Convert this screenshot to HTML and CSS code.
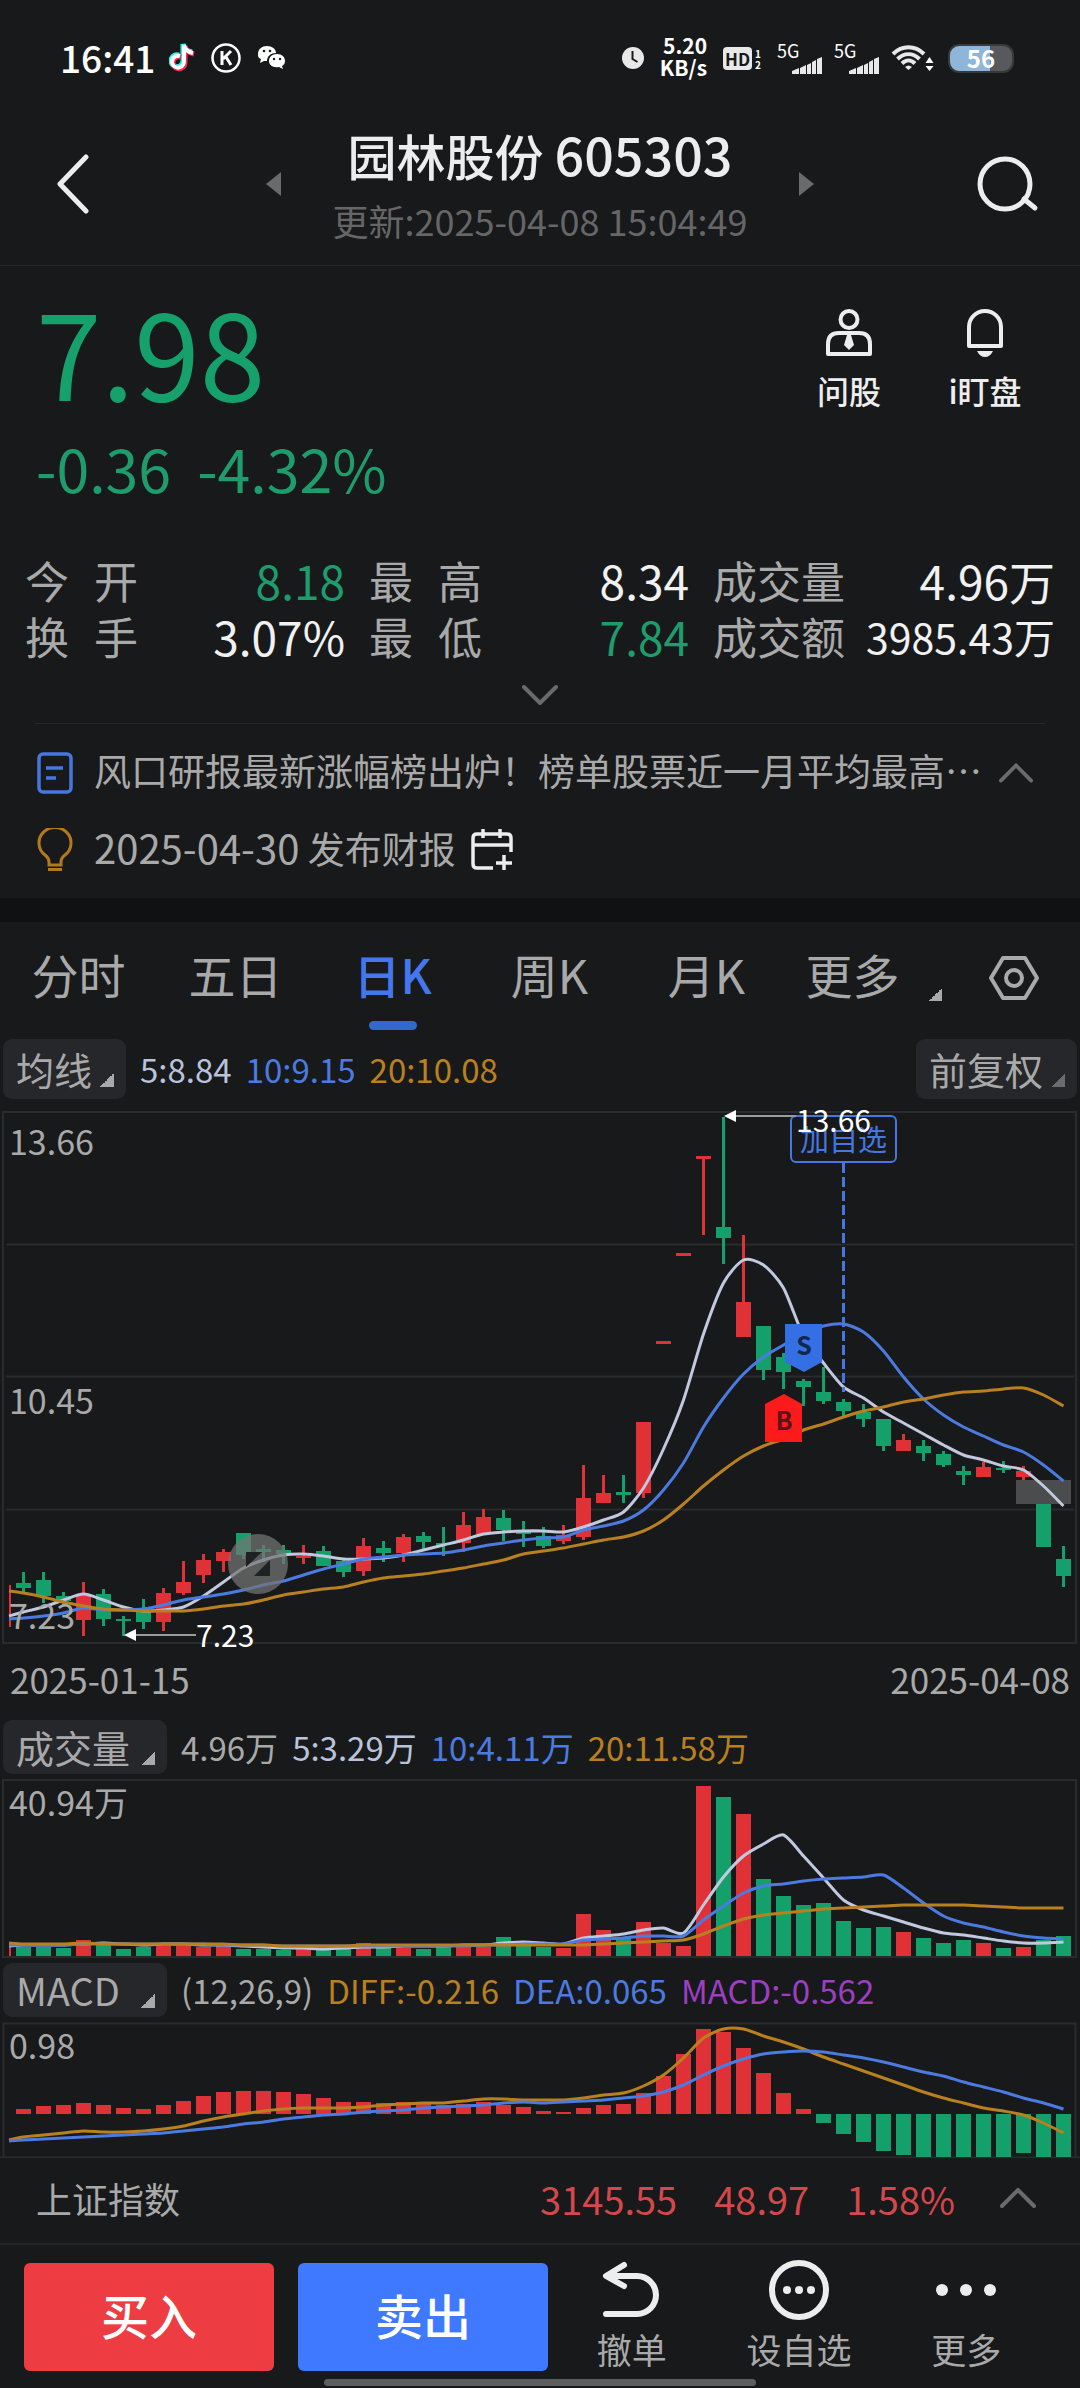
FILE: index.html
```html
<!DOCTYPE html>
<html lang="zh-CN">
<head>
<meta charset="utf-8">
<meta name="viewport" content="width=device-width, initial-scale=1">
<title>园林股份 605303</title>
<link rel="stylesheet" href="styles.css">
</head>
<body>
<div class="statusbar">
  <span class="clock">16:41</span>
  <div class="status-apps">
    <svg width="26" height="30" viewBox="0 0 26 30"><g fill="none" stroke-width="5"><path d="M11 13a6 6 0 1 0 4 6V2c1 5 4 7 9 8" stroke="#25f4ee" transform="translate(-1 -1)"/><path d="M11 13a6 6 0 1 0 4 6V2c1 5 4 7 9 8" stroke="#fe2c55" transform="translate(1 1)"/><path d="M11 13a6 6 0 1 0 4 6V2c1 5 4 7 9 8" stroke="#fff" stroke-width="4"/></g></svg>
    <svg width="30" height="30" viewBox="0 0 30 30" fill="none" stroke="#fff"><circle cx="15" cy="15" r="13.500" stroke-width="2.500"/><path d="M11 8v14M20 8l-8 8M15 14l5 8" stroke-width="3"/></svg>
    <svg width="30" height="26" viewBox="0 0 30 26"><path d="M10 1c5 0 9 3 9 7-5 0-9 3-9 8l-3 0-4 2 1-4C1 13 1 11 1 9c0-5 4-8 9-8z" fill="#fff"/><path d="M20 9c5 0 8 3 8 7 0 2-1 4-3 5l1 3-4-2c-6 1-10-2-10-6s3-7 8-7z" fill="#fff"/><g fill="#18191b"><circle cx="7" cy="6" r="1.300"/><circle cx="13" cy="6" r="1.300"/><circle cx="17" cy="14" r="1.200"/><circle cx="23" cy="14" r="1.200"/></g></svg>
  </div>
  <div class="status-right">
    <svg width="22" height="22" viewBox="0 0 22 22"><circle cx="11" cy="11" r="11" fill="#e8e8e8"/><path d="M10.500 4v8l5 3" fill="none" stroke="#18191b" stroke-width="2"/></svg>
    <span class="speed">5.20<br>KB/s</span>
    <span class="hd-group"><b class="hd">HD</b><small class="sims">1<br>2</small></span>
    <span class="signal"><small>5G</small><svg width="30" height="17" viewBox="0 0 30 17" fill="#e8e8e8"><path d="M0 14l7-3v6H0zM8 11l6-3v9H8zM15 8l4-2v11h-4zM20 5l4-2v14h-4zM25 2l5-2v17h-5z"/></svg></span>
    <span class="signal"><small>5G</small><svg width="30" height="17" viewBox="0 0 30 17" fill="#e8e8e8"><path d="M0 14l7-3v6H0zM8 11l6-3v9H8zM15 8l4-2v11h-4zM20 5l4-2v14h-4zM25 2l5-2v17h-5z"/></svg></span>
    <svg class="wifi" width="43" height="28" viewBox="0 0 43 28"><g fill="none" stroke="#e8e8e8" stroke-width="4"><path d="M2 10c9-9 22-9 31 0"/><path d="M6.500 15c7-6.500 15-6.500 22 0"/><path d="M11 19.500c4-4 9-4 13 0"/></g><path d="M14 23q3.500-3 7 0l-3.500 3z" fill="#e8e8e8"/><path d="M38.500 13l4 6h-8zM38.500 27l4-5h-8z" fill="#fff"/></svg>
    <span class="battery">56</span>
  </div>
</div>

<header class="header">
  <button class="icon-btn back" aria-label="返回"><svg width="34" height="60" viewBox="0 0 34 60" fill="none" stroke="#ededed" stroke-width="5" stroke-linecap="round" stroke-linejoin="round"><path d="M30 3L4 30l26 27"/></svg></button>
  <div class="stock">
    <button class="icon-btn" aria-label="上一只"><svg width="15" height="24" viewBox="0 0 15 24" fill="#6b6b6c"><path d="M15 0v24L0 12z"/></svg></button>
    <div class="stock-name">
      <h1>园林股份 <span class="code">605303</span></h1>
      <p>更新:2025-04-08 15:04:49</p>
    </div>
    <button class="icon-btn" aria-label="下一只"><svg width="15" height="24" viewBox="0 0 15 24" fill="#6b6b6c"><path d="M0 0v24l15-12z"/></svg></button>
  </div>
  <button class="icon-btn" aria-label="搜索"><svg width="62" height="58" viewBox="0 0 62 58" fill="none" stroke="#ededed" stroke-width="5"><circle cx="28" cy="29" r="25"/><path d="M47 44l11 9" stroke-linecap="round"/></svg></button>
</header>

<section class="quote">
  <div class="quote-top">
    <div>
      <div class="price">7.98</div>
      <div class="change"><span>-0.36</span><span>-4.32%</span></div>
    </div>
    <div class="quick">
      <button><svg width="48" height="50" viewBox="0 0 48 50" fill="none" stroke="#ededed" stroke-width="4"><circle cx="24" cy="11.500" r="8.500"/><path d="M3 46V36q0-11 11-11h20q11 0 11 11v10z" stroke-linejoin="round"/><path d="M22 27h4l3 10-5 5-5-5z" fill="#ededed" stroke="none"/></svg><span>问股</span></button>
      <button><svg width="48" height="50" viewBox="0 0 48 50"><path d="M8 38V19a16 16 0 0 1 32 0v19z" fill="none" stroke="#ededed" stroke-width="4" stroke-linejoin="round"/><path d="M16 43h16q-3 6-8 6t-8-6z" fill="#ededed"/></svg><span>i盯盘</span></button>
    </div>
  </div>
  <dl class="stats">
    <div><dt><i>今</i><i>开</i></dt><dd class="down">8.18</dd></div>
    <div><dt><i>最</i><i>高</i></dt><dd>8.34</dd></div>
    <div><dt>成交量</dt><dd>4.96万</dd></div>
    <div><dt><i>换</i><i>手</i></dt><dd>3.07%</dd></div>
    <div><dt><i>最</i><i>低</i></dt><dd class="down">7.84</dd></div>
    <div><dt>成交额</dt><dd class="small">3985.43万</dd></div>
  </dl>
  <button class="expand" aria-label="展开"><svg width="36" height="20" viewBox="0 0 36 20" fill="none" stroke="#6b6b6c" stroke-width="4" stroke-linecap="round"><path d="M2 2l16 16L34 2"/></svg></button>
  <div class="news">
    <div class="news-row">
      <svg width="36" height="42" viewBox="0 0 36 42" fill="none" stroke="#4677e0" stroke-width="3.500"><rect x="2" y="2" width="32" height="38" rx="4"/><path d="M9 16h17M9 26h10"/></svg>
      <a href="#news">风口研报最新涨幅榜出炉！榜单股票近一月平均最高…</a>
      <button class="icon-btn" aria-label="收起"><svg width="34" height="20" viewBox="0 0 36 20" fill="none" stroke="#6b6b6c" stroke-width="4" stroke-linecap="round"><path d="M2 18L18 2l16 16"/></svg></button>
    </div>
    <div class="news-row">
      <svg width="36" height="44" viewBox="0 0 36 44" fill="none" stroke="#b3791b" stroke-width="3"><path d="M12 37v-3q0-4-4-7a16 15.500 0 1 1 20 0q-4 3-4 7v3z"/><path d="M11 41.500h14"/></svg>
      <span><b class="date">2025-04-30</b> 发布财报</span>
      <svg width="42" height="42" viewBox="0 0 42 42" fill="none" stroke="#ededed" stroke-width="3.500"><path d="M22 39H6q-4 0-4-4V9q0-4 4-4h30q4 0 4 4v14M2 16h38M12 0v9M29 0v9M33 26v15M25 34h16"/></svg>
    </div>
  </div>
</section>

<main class="chart">
  <nav class="tabs">
    <button>分时</button><button>五日</button><button class="active">日K</button><button>周K</button><button>月K</button><button class="more">更多</button>
    <button aria-label="设置"><svg width="52" height="46" viewBox="0 0 52 46" fill="none" stroke="#a9a9aa" stroke-width="4"><path d="M15 3h22l12 20-12 20H15L3 23z" stroke-linejoin="round"/><circle cx="26" cy="23" r="8"/></svg></button>
  </nav>

  <div class="legend legend-top">
    <button class="chip">均线<i class="corner"></i></button>
    <span class="c-white">5:8.84</span><span class="c-blue">10:9.15</span><span class="c-orange">20:10.08</span>
    <button class="chip chip-right">前复权<i class="corner dim"></i></button>
  </div>
  <svg class="plot" viewBox="0 0 1080 552">
    <g class="grid"><rect x="3" y="11" width="1073" height="531"/><path d="M6 143.500h1068M6 275.500h1068M6 408.500h1068"/></g>
    <rect x="1016" y="379" width="55" height="24" fill="#4b4c4e"/>
    <g id="candles"></g>
    <g id="price-lines"></g>
    <g fill="none" stroke="#4677e0"><path d="M843.500 62v229" stroke-width="3" stroke-dasharray="10 4"/><rect x="791" y="15" width="105" height="46" rx="5" stroke-width="2"/></g>
    <text class="t-fav" x="800" y="50">加自选</text>
    <path d="M785 223h37v38l-18 10-19-10z" fill="#3470e4"/><text class="t-mark" x="804" y="254" fill="#12264f">S</text>
    <path d="M765 341h37v-38l-18-10-19 10z" fill="#fb1b1b"/><text class="t-mark" x="784" y="329" fill="#5b1218">B</text>
    <text class="t-axis" x="9" y="54">13.66</text>
    <text class="t-axis" x="9" y="313">10.45</text>
    <text class="t-axis" x="9" y="528">7.23</text>
    <g stroke="#9b9b9b" stroke-width="2"><path d="M734 15h62M134 534h62"/></g>
    <path d="M724 15l12-6v12zM124 534l12-6v12z" fill="#fff"/>
    <text class="t-note" x="796" y="31">13.66</text>
    <text class="t-note" x="196" y="546">7.23</text>
    <g class="zoom-icon"><circle cx="258" cy="463" r="30" fill="#747474" opacity=".72"/><path d="M246 451h16l-16 15zM270 459v16h-16z" fill="#202123"/></g>
  </svg>
  <div class="dates"><span>2025-01-15</span><span>2025-04-08</span></div>

  <div class="legend">
    <button class="chip">成交量<i class="corner"></i></button>
    <span>4.96万</span><span class="c-white">5:3.29万</span><span class="c-blue">10:4.11万</span><span class="c-orange">20:11.58万</span>
  </div>
  <svg class="plot" viewBox="0 0 1080 183">
    <rect class="grid" x="3" y="3" width="1073" height="177"/>
    <text class="t-axis" x="9" y="39">40.94万</text>
    <g id="volume"></g>
    <g id="volume-lines"></g>
  </svg>

  <div class="legend">
    <button class="chip">MACD<i class="corner"></i></button>
    <span>(12,26,9)</span><span class="c-orange">DIFF:-0.216</span><span class="c-blue">DEA:0.065</span><span class="c-purple">MACD:-0.562</span>
  </div>
  <svg class="plot" viewBox="0 0 1080 138">
    <path class="grid" d="M3.500 137V3.500h1072V137M0 137.500h1080"/>
    <text class="t-axis" x="9" y="39">0.98</text>
    <g id="macd"></g>
    <g id="macd-lines"></g>
  </svg>
</main>

<section class="index-row">
  <span class="index-name">上证指数</span>
  <span class="index-num">3145.55</span><span class="index-num">48.97</span><span class="index-num">1.58%</span>
  <button class="icon-btn" aria-label="展开指数"><svg width="36" height="20" viewBox="0 0 36 20" fill="none" stroke="#6b6b6c" stroke-width="4" stroke-linecap="round"><path d="M2 18L18 2l16 16"/></svg></button>
</section>

<footer class="actions">
  <button class="trade buy">买入</button>
  <button class="trade sell">卖出</button>
  <div class="tools">
    <button><svg width="60" height="62" viewBox="0 0 60 62" fill="none" stroke="#ededed" stroke-width="6" stroke-linecap="round" stroke-linejoin="round"><path d="M22 6L4 17l18 10M5 17h30a19 19 0 0 1 0 38H4"/></svg><span>撤单</span></button>
    <button><svg width="60" height="62" viewBox="0 0 60 62"><circle cx="30" cy="31" r="27" fill="none" stroke="#ededed" stroke-width="6"/><g fill="#ededed"><circle cx="18" cy="31" r="4"/><circle cx="30" cy="31" r="4"/><circle cx="42" cy="31" r="4"/></g></svg><span>设自选</span></button>
    <button><svg width="60" height="62" viewBox="0 0 60 62" fill="#ededed"><circle cx="6" cy="31" r="6"/><circle cx="30" cy="31" r="6"/><circle cx="54" cy="31" r="6"/></svg><span>更多</span></button>
  </div>
</footer>
<div class="home-bar"></div>
<script src="charts.js"></script>
</body>
</html>
```
FILE: styles.css
```css
* { box-sizing: border-box; margin: 0; padding: 0; }

body {
  background: #18191b;
  color: #a9a9aa;
  font-family: "Noto Sans CJK SC", sans-serif;
  font-size: 36px;
}

button { background: none; border: 0; color: inherit; font: inherit; }
a { color: inherit; text-decoration: none; }
i { font-style: normal; }
svg { display: block; flex: none; }
.icon-btn { display: flex; flex: none; }

/* system status bar */
.statusbar { display: flex; align-items: center; height: 116px; padding: 0 66px 0 60px; color: #fff; }
.clock { font-size: 37px; font-weight: 500; line-height: 44px; margin-right: 14px; padding-bottom: 3px; }
.status-apps { display: flex; align-items: center; gap: 16px; }
.status-right { display: flex; align-items: center; gap: 16px; margin-left: auto; }
.speed { font-size: 21px; font-weight: 700; line-height: 22px; text-align: right; padding-bottom: 4px; }
.hd-group { display: flex; align-items: flex-end; gap: 3px; }
.hd { background: #e8e8e8; border-radius: 4px; color: #18191b; font-size: 17px; line-height: 23px; padding: 0 2px; }
.sims { font-size: 10px; font-weight: 700; line-height: 11px; }
.signal { display: flex; flex-direction: column; width: 45px; height: 31px; margin-right: -4px; }
.signal small { font-size: 18px; line-height: 14px; }
.signal svg { margin-left: auto; }
.wifi { margin-right: -2px; }
.battery {
  width: 66px; height: 29px; border: 2px solid #38393b; border-radius: 11px;
  background: linear-gradient(90deg, #8fb5d9 64%, #58595c 64%);
  font-size: 24px; font-weight: 700; line-height: 24px; text-align: center;
}

/* title */
.header { display: flex; justify-content: space-between; align-items: center; padding: 8px 41px 22px; border-bottom: 1px solid #27282a; }
.back { width: 62px; padding-left: 15px; }
.stock { display: flex; align-items: center; gap: 42px; }
.stock-name { display: flex; flex-direction: column; gap: 12px; width: 434px; text-align: center; white-space: nowrap; }
h1 { color: #ededed; font-size: 49px; font-weight: 500; line-height: 60px; }
.code { font-size: 52px; }
.stock-name p { color: #666667; font-size: 36px; line-height: 46px; }

/* quote */
.quote { padding-bottom: 10px; border-bottom: 24px solid #101113; }
.quote-top { display: flex; justify-content: space-between; padding: 22px 27px 48px 36px; }
.price { color: #16a06b; font-size: 118px; line-height: 124px; }
.change { display: flex; gap: 26px; margin-top: 20px; color: #1f9c6c; font-size: 59px; line-height: 72px; }
.quick { display: flex; padding-top: 20px; }
.quick button { display: flex; flex-direction: column; align-items: center; gap: 12px; width: 136px; color: #ededed; font-size: 32px; font-weight: 500; line-height: 40px; }
.stats { display: grid; grid-template-columns: 320fr 320fr 342fr; column-gap: 24px; padding: 0 25px 3px; }
.stats div { display: flex; justify-content: space-between; font-size: 44px; line-height: 56px; white-space: nowrap; }
dt { display: flex; justify-content: space-between; min-width: 113px; }
dd { color: #f1f1f1; font-size: 46px; }
dd.down { color: #1f9c6c; }
dd.small { font-size: 41px; }
.expand { display: flex; align-items: center; justify-content: center; width: 100%; height: 56px; }
.news { margin: 0 35px; padding-top: 10px; border-top: 1px solid #27282a; }
.news-row { display: flex; align-items: center; gap: 21px; height: 77px; padding: 0 12px 0 2px; font-size: 37px; }
.news-row a, .news-row span { padding-bottom: 6px; white-space: nowrap; }
.news-row a { flex: 1; }
.news-row > :last-child { margin-left: -6px; }
.date { font-size: 40px; font-weight: 400; }

/* chart */
.tabs { display: grid; grid-template-columns: repeat(6, 157fr) 138fr; height: 117px; }
.tabs button { position: relative; display: flex; align-items: center; justify-content: center; font-size: 47px; line-height: 60px; padding-bottom: 14px; }
.tabs button:last-child { padding: 0 0 6px 6px; }
.tabs .active { color: #4477ee; font-weight: 500; }
.tabs .active::after { content: ""; position: absolute; bottom: 9px; width: 48px; height: 9px; border-radius: 5px; background: #3368cf; }
.tabs .more { padding-right: 22px; }
.tabs .more::after { content: ""; position: absolute; right: 0; bottom: 38px; width: 13px; height: 13px; background: linear-gradient(135deg, transparent 50%, #a9a9aa 50%); }
.legend { display: flex; align-items: center; gap: 14px; height: 60px; padding: 0 3px; font-size: 33px; line-height: 48px; white-space: nowrap; }
.legend-top { margin-bottom: 2px; }
.legend-top .chip { min-width: 0; height: 60px; gap: 8px; }
.chip { display: flex; align-items: center; justify-content: space-between; min-width: 164px; height: 54px; padding: 0 12px 0 13px; border-radius: 9px; background: #26272a; font-size: 38px; }
.chip-right { margin-left: auto; }
.corner { width: 14px; height: 14px; margin-top: 22px; background: linear-gradient(135deg, transparent 50%, #a9a9aa 50%); }
.corner.dim { background: linear-gradient(135deg, transparent 50%, #6b6b6c 50%); }
.c-white { color: #b9c3dc; }
.c-blue { color: #4b7be0; }
.c-orange { color: #b9801f; }
.c-purple { color: #9d3fc0; }
.plot { width: 100%; height: auto; font-family: inherit; }
.grid { fill: none; stroke: #2a2b2d; stroke-width: 2; }
.t-axis { fill: #a9a9aa; font-size: 34px; }
.t-note { fill: #fff; font-size: 30px; }
.t-fav { fill: #4677e0; font-size: 29px; }
.t-mark { font-size: 25px; font-weight: 700; text-anchor: middle; }
.dates { display: flex; justify-content: space-between; padding: 0 10px 12px; font-size: 35px; line-height: 52px; }

/* index strip */
.index-row { display: flex; align-items: center; gap: 37px; height: 87px; padding: 0 44px 5px 36px; border-bottom: 2px solid #242527; }
.index-name { margin-right: auto; }
.index-num { color: #d4474a; font-size: 38px; }
.index-row .icon-btn { margin-left: 8px; }

/* bottom actions */
.actions { display: flex; gap: 24px; padding: 18px 30px 8px 24px; }
.trade { flex: 250; height: 108px; padding-bottom: 6px; border-radius: 6px; color: #fff; font-size: 48px; font-weight: 500; }
.buy { background: #ed3d42; }
.sell { background: #3f79ff; }
.tools { display: flex; flex: 502; margin-left: -24px; }
.tools button { display: flex; flex: 1; flex-direction: column; align-items: center; gap: 6px; margin-top: -4px; font-size: 35px; line-height: 44px; }
.home-bar { width: 40%; height: 7px; margin: 0 auto 3px; border-radius: 4px; background: #5d5e60; }
```
FILE: charts.js
```js
// Each chart column is 20 units wide with a 15 unit body.
const RED = '#e03236', GREEN = '#14a06b';
const WHITE = '#c0c9df', BLUE = '#4b7be0', ORANGE = '#b9801f';
const centre = i => (i === 0 ? 9 : 3.5 + 20 * i);

// [direction, high, body top, body bottom, low]
const candles = [
  ['r',484,484,484,526],['g',471,482,487,491],['g',471,479,495,502],['g',491,495,500,504],['r',481,494,519,535],
  ['g',488,493,518,525],['g',515,518,520,535],['g',498,509,521,528],['r',487,492,521,530],['r',460,481,492,494],
  ['r',453,459,474,482],['r',448,451,460,471],['g',432,432,454,458],['g',444,448,451,461],['g',444,449,453,463],
  ['r',444,455,457,463],['g',445,450,465,465],['g',459,460,471,476],['r',437,445,470,475],['g',440,447,452,461],
  ['r',433,436,452,461],['g',431,435,441,448],['g',426,442,444,455],['r',411,424,442,451],['r',408,416,433,433],
  ['g',409,417,429,440],['g',420,431,433,446],['g',426,435,445,447],['r',424,434,440,443],['r',364,397,436,439],
  ['r',374,392,402,402],['g',374,391,394,402],['r',321,321,392,397],['r',240,240,243,243],['r',152,152,155,155],
  ['r',55,55,58,134],['g',16,126,137,163],['r',134,201,236,236],['g',225,225,269,279],['g',252,256,271,288],
  ['g',278,280,286,305],['g',266,291,300,303],['g',298,301,310,315],['g',303,311,318,326],['g',318,318,345,350],
  ['r',333,339,350,350],['g',339,345,352,360],['g',350,353,364,366],['g',365,370,374,384],['r',361,366,376,376],
  ['g',360,367,369,372],['r',365,370,376,379],['g',403,403,446,446],['g',445,458,475,486]
];
const ma5 = [515,511,506,499,493,499,506,510,509,506,495,481,467,459,454,453,455,458,458,457,454,449,444,439,433,431,430,430,431,426,419,411,387,348,299,233,182,159,164,187,235,262,286,297,311,322,333,344,354,359,365,369,385,405];
const ma10 = [518,517,515,512,507,509,509,508,504,499,496,493,489,484,480,474,468,463,458,456,454,453,452,449,445,442,439,437,436,429,425,420,409,389,362,326,297,273,256,244,232,225,223,231,250,276,298,314,326,335,344,351,364,380];
const ma20 = [490,492,496,501,505,508,509,510,510,510,508,505,503,499,494,491,488,486,481,477,475,473,470,467,463,459,453,450,447,443,439,436,430,419,403,385,369,355,345,338,329,323,316,310,306,301,298,294,291,290,288,287,294,305];

const volume = [9,9,9,8,16,13,7,9,10,10,9,10,7,7,6,8,8,8,13,8,8,7,9,10,9,19,10,9,8,42,26,19,34,13,10,170,159,142,77,60,51,53,35,28,29,24,18,13,16,13,8,9,16,20];
const vol5 = [169,168,168,168,167,166,167,168,167,167,168,168,169,170,171,171,172,171,170,170,169,169,169,168,168,166,165,166,167,161,159,157,153,151,156,128,100,79,67,58,79,101,123,133,139,145,151,156,158,161,164,166,166,165];
const vol10 = [168,168,168,168,167,167,167,167,167,167,167,168,168,168,169,169,169,169,169,169,169,169,169,169,168,168,167,167,167,163,162,161,159,159,159,143,129,116,109,107,104,102,101,100,98,111,126,139,146,150,155,159,161,162];
const vol20 = [166,167,167,167,166,167,167,167,167,167,167,167,168,168,169,169,169,169,168,168,168,168,168,168,168,168,168,168,168,168,167,166,165,164,163,157,149,142,138,136,134,132,131,130,129,128,128,128,128,129,130,131,131,131];

const macd = [0,5,8,9,11,9,6,5,9,13,18,22,23,23,22,20,16,12,12,11,12,11,9,10,12,9,7,3,2,6,9,10,21,38,60,85,82,66,41,21,5,-9,-20,-28,-37,-41,-43,-43,-43,-43,-43,-39,-43,-43];
const diff = [120,117,115,113,111,112,112,111,109,106,101,97,94,91,89,88,88,88,87,85,84,83,83,81,79,79,80,80,80,78,75,73,66,55,38,18,9,9,16,22,29,37,44,51,58,65,72,78,83,88,91,95,103,113];
const dea = [121,120,119,118,117,116,115,114,113,111,109,107,104,102,99,97,95,94,92,91,90,88,87,86,85,83,82,83,82,81,80,78,76,72,65,55,46,39,34,32,31,32,35,38,42,47,52,56,62,67,72,78,83,89];

function rect(x, y, w, h, fill) {
  return `<rect x="${x}" y="${y}" width="${w}" height="${h}" fill="${fill}"/>`;
}

function curve(values, colour) {
  const p = values.map((y, i) => [centre(i), y]);
  let d = `M${p[0]}`;
  for (let i = 0; i < p.length - 1; i++) {
    const a = p[i - 1] || p[i], b = p[i], c = p[i + 1], e = p[i + 2] || c;
    d += `C${b[0] + (c[0] - a[0]) / 8} ${b[1] + (c[1] - a[1]) / 8} ${c[0] - (e[0] - b[0]) / 8} ${c[1] - (e[1] - b[1]) / 8} ${c}`;
  }
  return `<path d="${d}" fill="none" stroke="${colour}" stroke-width="3"/>`;
}

function bar(i, top, height, fill) {
  return i === 0 ? rect(9, top, 2, height, fill) : rect(centre(i) - 7.5, top, 15, height, fill);
}

const colourOf = i => (candles[i][0] === 'r' ? RED : GREEN);
const fill = (id, html) => { document.getElementById(id).innerHTML = html; };

fill('candles', candles.map(([, high, top, bottom, low], i) =>
  rect(i === 0 ? 9 : centre(i) - 1.5, high, i === 0 ? 2 : 3, low - high, colourOf(i)) +
  bar(i, top, bottom - top, colourOf(i))).join(''));
fill('price-lines', curve(ma5, WHITE) + curve(ma10, BLUE) + curve(ma20, ORANGE));

fill('volume', volume.map((v, i) => bar(i, 179 - v, v, colourOf(i))).join(''));
fill('volume-lines', curve(vol5, WHITE) + curve(vol10, BLUE) + curve(vol20, ORANGE));

fill('macd', macd.map((v, i) => bar(i, v > 0 ? 94 - v : 94, Math.abs(v), v > 0 ? RED : GREEN)).join(''));
fill('macd-lines', curve(diff, ORANGE) + curve(dea, BLUE));
```
